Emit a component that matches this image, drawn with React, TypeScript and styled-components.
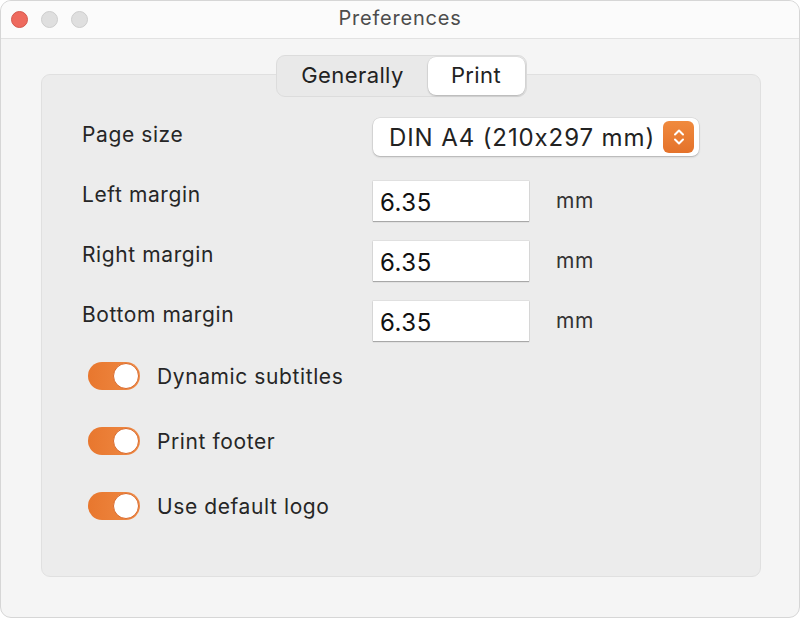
import { useState } from 'react'
import styled, { createGlobalStyle } from 'styled-components'

/*---> Global <---*/
const GlobalStyle = createGlobalStyle`
  html, body {
    margin: 0;
    padding: 0;
    background: #ffffff;
  }
  body {
    font-family: Inter, Roboto, 'Liberation Sans', sans-serif;
    font-feature-settings: 'calt' 0;
    color: #262626;
    -webkit-font-smoothing: antialiased;
  }
  input {
    font-feature-settings: 'calt' 0;
  }
`

/*---> Components <---*/
const ChevronIcon = () => (
  <svg width='14' height='20' viewBox='0 0 14 20' fill='none'>
    <path
      d='M3 7.5 L7 3.5 L11 7.5'
      stroke='#fff'
      strokeWidth='2'
      strokeLinecap='round'
      strokeLinejoin='round'
    />
    <path
      d='M3 12.5 L7 16.5 L11 12.5'
      stroke='#fff'
      strokeWidth='2'
      strokeLinecap='round'
      strokeLinejoin='round'
    />
  </svg>
)

const fields = [
  { label: 'Left margin', value: '6.35' },
  { label: 'Right margin', value: '6.35' },
  { label: 'Bottom margin', value: '6.35' },
]

const App = () => {
  const [tab, setTab] = useState('print')
  const [toggles, setToggles] = useState({
    subtitles: true,
    footer: true,
    logo: true,
  })

  const flip = (key: keyof typeof toggles) =>
    setToggles({ ...toggles, [key]: !toggles[key] })

  return (
    <>
      <GlobalStyle />
      <Window>
        <TitleBar>
          <Lights>
            <Light $color='#ee6a5e' $border='#d4574c' />
            <Light $color='#dfdfdf' $border='#cdcdcd' />
            <Light $color='#dfdfdf' $border='#cdcdcd' />
          </Lights>
          <Title>Preferences</Title>
        </TitleBar>
        <Body>
          <TabsRow>
            <Segmented>
              <Segment
                $active={tab === 'generally'}
                $width={150}
                onClick={() => setTab('generally')}
              >
                Generally
              </Segment>
              <Segment
                $active={tab === 'print'}
                $width={97}
                onClick={() => setTab('print')}
              >
                Print
              </Segment>
            </Segmented>
          </TabsRow>
          <Panel>
            <FormGrid>
              <FieldRow>
                <Label $offset={6}>Page size</Label>
                <Popup>
                  <PopupText>DIN A4 (210x297 mm)</PopupText>
                  <PopupArrow>
                    <ChevronIcon />
                  </PopupArrow>
                </Popup>
              </FieldRow>
              {fields.map((field) => (
                <FieldRow key={field.label}>
                  <Label $offset={2}>{field.label}</Label>
                  <Input defaultValue={field.value} />
                  <Unit>mm</Unit>
                </FieldRow>
              ))}
            </FormGrid>
            <ToggleList>
              <ToggleRow>
                <Switch
                  $on={toggles.subtitles}
                  onClick={() => flip('subtitles')}
                />
                <ToggleLabel>Dynamic subtitles</ToggleLabel>
              </ToggleRow>
              <ToggleRow>
                <Switch $on={toggles.footer} onClick={() => flip('footer')} />
                <ToggleLabel>Print footer</ToggleLabel>
              </ToggleRow>
              <ToggleRow>
                <Switch $on={toggles.logo} onClick={() => flip('logo')} />
                <ToggleLabel>Use default logo</ToggleLabel>
              </ToggleRow>
            </ToggleList>
          </Panel>
        </Body>
      </Window>
    </>
  )
}

/*---> Styles <---*/
const Window = styled.div`
  width: 800px;
  height: 618px;
  box-sizing: border-box;
  background: #f5f5f5;
  border-radius: 11px;
  border: 1px solid #d6d6d6;
  overflow: hidden;
  display: flex;
  flex-direction: column;
`

const TitleBar = styled.div`
  height: 38px;
  flex-shrink: 0;
  box-sizing: border-box;
  padding-bottom: 3px;
  display: flex;
  align-items: center;
  justify-content: center;
  background: #fbfbfb;
  border-bottom: 1px solid #e2e2e2;
  position: relative;
`

const Lights = styled.div`
  position: absolute;
  left: 10px;
  top: 10px;
  display: flex;
  gap: 13px;
`

const Light = styled.span<{ $color: string; $border: string }>`
  width: 17px;
  height: 17px;
  box-sizing: border-box;
  border-radius: 50%;
  background: ${(p) => p.$color};
  border: 1px solid ${(p) => p.$border};
`

const Title = styled.div`
  font-size: 20px;
  letter-spacing: 0.8px;
  color: #4d4d4d;
`

const Body = styled.div`
  padding: 16px 40px 0 40px;
`

const TabsRow = styled.div`
  display: flex;
  justify-content: center;
  margin-bottom: -23px;
  position: relative;
  z-index: 1;
`

const Segmented = styled.div`
  display: flex;
  height: 42px;
  box-sizing: border-box;
  padding: 1px;
  background: #e9e9e9;
  border: 1px solid #dcdcdc;
  border-radius: 9px;
  margin-left: 2px;
`

const Segment = styled.div<{ $active: boolean; $width: number }>`
  width: ${(p) => p.$width}px;
  display: flex;
  align-items: center;
  justify-content: center;
  padding-bottom: 3px;
  box-sizing: border-box;
  font-size: 22px;
  letter-spacing: 0.4px;
  color: #222;
  border-radius: 8px;
  background: ${(p) => (p.$active ? '#ffffff' : 'transparent')};
  box-shadow: ${(p) =>
    p.$active ? '0 1px 2px rgba(0,0,0,0.2), 0 0 0 0.5px rgba(0,0,0,0.08)' : 'none'};
  cursor: default;
`

const Panel = styled.div`
  width: 720px;
  height: 503px;
  box-sizing: border-box;
  background: #ececec;
  border: 1px solid #e0e0e0;
  border-radius: 9px;
  padding: 42px 0 0 40px;
`

const FormGrid = styled.div`
  display: flex;
  flex-direction: column;
  gap: 20px;
`

const FieldRow = styled.div`
  display: grid;
  grid-template-columns: 291px 156px auto;
  align-items: start;
  height: 40px;
  &:first-child {
    margin-bottom: 4px;
  }
`

const Label = styled.div<{ $offset: number }>`
  font-size: 21px;
  letter-spacing: 0.6px;
  line-height: 24px;
  padding-top: ${(p) => p.$offset}px;
  color: #262626;
`

const Popup = styled.div`
  grid-column: 2 / span 2;
  width: 326px;
  height: 38px;
  box-sizing: border-box;
  display: flex;
  align-items: center;
  justify-content: space-between;
  padding: 0 5px 0 16px;
  margin-top: 1px;
  background: #ffffff;
  border-radius: 7px;
  box-shadow: 0 1px 2px rgba(0, 0, 0, 0.22), 0 0 0 0.5px rgba(0, 0, 0, 0.1);
`

const PopupText = styled.span`
  font-size: 24px;
  letter-spacing: 0.9px;
  color: #222;
  white-space: nowrap;
`

const PopupArrow = styled.span`
  width: 31px;
  height: 32px;
  border-radius: 6px;
  display: flex;
  align-items: center;
  justify-content: center;
  background: linear-gradient(#f08a3e, #e4722a);
`

const Input = styled.input`
  width: 156px;
  height: 40px;
  box-sizing: border-box;
  border: none;
  outline: none;
  padding: 2px 7px 0;
  font-family: inherit;
  font-size: 24px;
  letter-spacing: 0.5px;
  color: #111;
  background: #ffffff;
  box-shadow: 0 1px 1px rgba(0, 0, 0, 0.25), 0 0 0 0.5px rgba(0, 0, 0, 0.1);
`

const Unit = styled.span`
  font-size: 21px;
  letter-spacing: 0.5px;
  line-height: 40px;
  padding-left: 27px;
  color: #333;
`

const ToggleList = styled.div`
  display: flex;
  flex-direction: column;
  gap: 37px;
  margin-top: 21px;
  padding-left: 6px;
`

const ToggleRow = styled.div`
  display: flex;
  align-items: center;
  height: 28px;
  gap: 17px;
`

const Switch = styled.span<{ $on: boolean }>`
  width: 52px;
  height: 28px;
  box-sizing: border-box;
  border-radius: 14px;
  background: ${(p) =>
    p.$on ? 'linear-gradient(90deg, #e8772e, #ef8a45)' : '#d9d9d9'};
  display: flex;
  align-items: center;
  justify-content: ${(p) => (p.$on ? 'flex-end' : 'flex-start')};
  padding: 1px;
  cursor: default;
  &::after {
    content: '';
    width: 26px;
    height: 26px;
    box-sizing: border-box;
    border-radius: 50%;
    background: #ffffff;
    border: 1.5px solid ${(p) => (p.$on ? '#d9692a' : '#c8c8c8')};
  }
`

const ToggleLabel = styled.span`
  font-size: 21px;
  letter-spacing: 0.6px;
  color: #262626;
`

export default App
